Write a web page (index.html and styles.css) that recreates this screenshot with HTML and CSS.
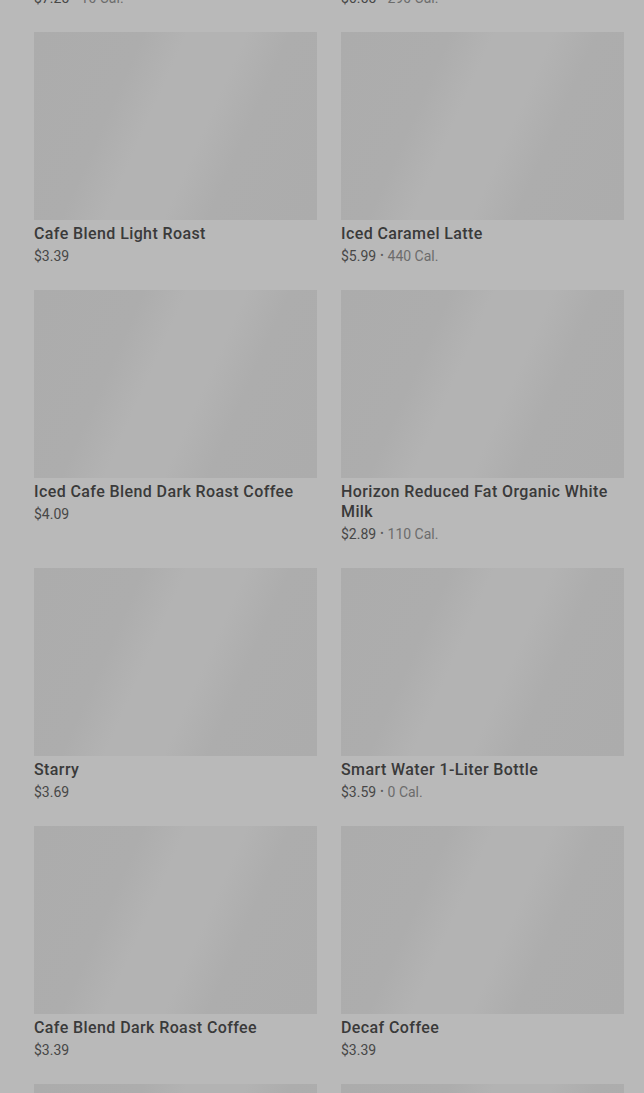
FILE: index.html
```html
<!DOCTYPE html>
<html lang="en">
<head>
<meta charset="utf-8">
<title>Menu</title>
<link rel="stylesheet" href="styles.css">
</head>
<body>
<main class="grid">
  <div class="card"><div class="img"></div><div class="title">Iced Coffee</div><div class="meta"><span class="price">$7.25</span><span class="dot">•</span><span class="cal">10 Cal.</span></div></div>
  <div class="card"><div class="img"></div><div class="title">Iced Vanilla Latte</div><div class="meta"><span class="price">$6.55</span><span class="dot">•</span><span class="cal">290 Cal.</span></div></div>

  <div class="card"><div class="img"></div><div class="title">Cafe Blend Light Roast</div><div class="meta"><span class="price">$3.39</span></div></div>
  <div class="card"><div class="img"></div><div class="title">Iced Caramel Latte</div><div class="meta"><span class="price">$5.99</span><span class="dot">•</span><span class="cal">440 Cal.</span></div></div>

  <div class="card"><div class="img"></div><div class="title">Iced Cafe Blend Dark Roast Coffee</div><div class="meta"><span class="price">$4.09</span></div></div>
  <div class="card"><div class="img"></div><div class="title">Horizon Reduced Fat Organic White Milk</div><div class="meta"><span class="price">$2.89</span><span class="dot">•</span><span class="cal">110 Cal.</span></div></div>

  <div class="card"><div class="img"></div><div class="title">Starry</div><div class="meta"><span class="price">$3.69</span></div></div>
  <div class="card"><div class="img"></div><div class="title">Smart Water 1-Liter Bottle</div><div class="meta"><span class="price">$3.59</span><span class="dot">•</span><span class="cal">0 Cal.</span></div></div>

  <div class="card"><div class="img"></div><div class="title">Cafe Blend Dark Roast Coffee</div><div class="meta"><span class="price">$3.39</span></div></div>
  <div class="card"><div class="img"></div><div class="title">Decaf Coffee</div><div class="meta"><span class="price">$3.39</span></div></div>

  <div class="card"><div class="img"></div><div class="title">Hot Chocolate</div><div class="meta"><span class="price">$3.99</span></div></div>
  <div class="card"><div class="img"></div><div class="title">Chai Latte</div><div class="meta"><span class="price">$4.99</span></div></div>
</main>
</body>
</html>
```
FILE: styles.css
```css
html, body {
  margin: 0;
  padding: 0;
  background: #b9b9b9;
  overflow: hidden;
}
body {
  font-family: Roboto, "Liberation Sans", Arial, sans-serif;
  color: #383838;
}
.grid {
  display: grid;
  grid-template-columns: 283px 283px;
  column-gap: 24px;
  row-gap: 24px;
  padding: 0 20px 0 34px;
  margin-top: -226px;
}
.card {
  display: flex;
  flex-direction: column;
}
.img {
  height: 188px;
  background: linear-gradient(114deg, #acacac 0%, #adadad 30%, #b3b3b3 42%, #b3b3b3 58%, #adadad 70%, #acacac 100%);
}
.title {
  margin-top: 4px;
  font-size: 16px;
  line-height: 20px;
  font-weight: 500;
  letter-spacing: 0.4px;
  color: #3a3a3a;
}
.meta {
  margin-top: 2px;
  font-size: 14px;
  line-height: 20px;
  display: flex;
  align-items: center;
  gap: 4px;
}
.price {
  color: #474747;
}
.dot {
  color: #5e5e5e;
  font-size: 10px;
}
.cal {
  color: #6c6c6c;
}
```
